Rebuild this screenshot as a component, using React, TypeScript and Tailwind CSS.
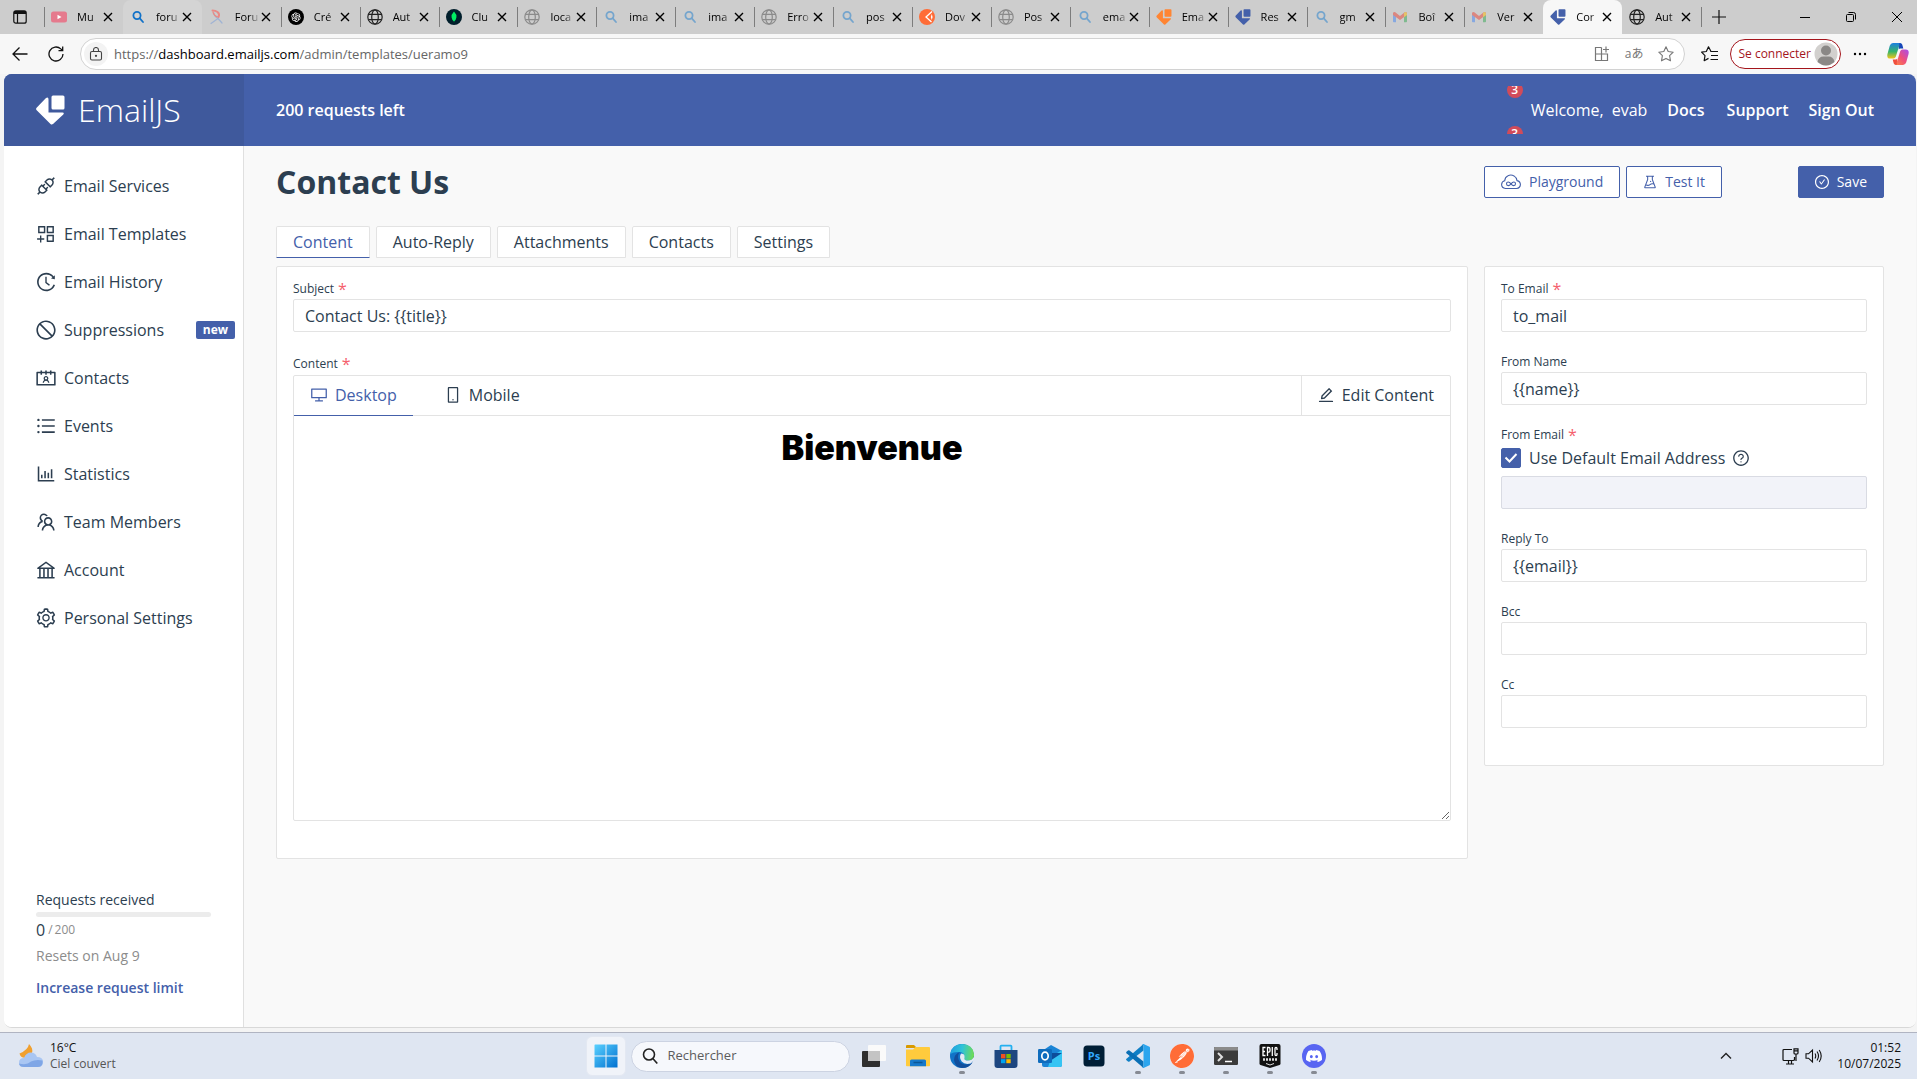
import { useState } from "react";
import type { ReactNode } from "react";
import {
  AiOutlineApi,
  AiOutlineAppstoreAdd,
  AiOutlineBank,
  AiOutlineBarChart,
  AiOutlineCheckCircle,
  AiOutlineContacts,
  AiOutlineDesktop,
  AiOutlineEdit,
  AiOutlineExperiment,
  AiOutlineHistory,
  AiOutlineMobile,
  AiOutlineOpenAI,
  AiOutlineQuestionCircle,
  AiOutlineSetting,
  AiOutlineStop,
  AiOutlineTeam,
  AiOutlineUnorderedList,
} from "react-icons/ai";
import { SiDiscord, SiPostman } from "react-icons/si";

function EmailJSMark({ className }: { className: string }) {
  return (
    <svg viewBox="0 0 29 30" className={className} fill="currentColor" aria-hidden="true">
      <rect x="15.5" y="0.5" width="13" height="14" rx="1.5" />
      <path d="M.6 12.8 10 3Q12.5 1.400 12.500 4.500V17.500H26.500Q28.600 17.700 27.300 19.400L17 29Q15.700 30 14.500 28.900L.7 15.300Q-.4 14 .6 12.800Z" />
    </svg>
  );
}

function Globe({ className }: { className: string }) {
  return (
    <svg viewBox="0 0 16 16" className={className} fill="none" stroke="currentColor" strokeWidth="1.2" aria-hidden="true">
      <circle cx="8" cy="8" r="7.200" />
      <ellipse cx="8" cy="8" rx="3.300" ry="7.200" />
      <path d="M1.500 5.400h13M1.500 10.600h13" />
    </svg>
  );
}

function SearchGlyph({ className }: { className: string }) {
  return (
    <svg viewBox="0 0 16 16" className={className} fill="none" stroke="currentColor" strokeWidth="1.800" strokeLinecap="round" aria-hidden="true">
      <circle cx="7" cy="6.500" r="3.600" />
      <path d="m9.800 9.300 3.200 3.700" />
    </svg>
  );
}

function GmailGlyph() {
  return (
    <svg viewBox="0 0 16 16" className="size-4 opacity-50" aria-hidden="true">
      <path d="M1 4v8.500q0 .8.800.8H4V6.600Z" fill="#4285f4" />
      <path d="M15 4v8.500q0 .8-.8.800H12V6.600Z" fill="#34a853" />
      <path d="M1 4.200Q1.500 2.300 3.300 3.300L8 6.900l4.700-3.600Q14.500 2.300 15 4.200V6l-7 5-7-5Z" fill="#ea4335" />
      <path d="M12 3.800Q14.500 1.800 15 4.500V6l-3 2.200Z" fill="#fbbc04" />
    </svg>
  );
}

function YoutubeGlyph() {
  return (
    <svg viewBox="0 0 16 16" className="size-4" aria-hidden="true">
      <rect x="0" y="2.500" width="16" height="11" rx="2.500" fill="#e57a8d" />
      <path d="m6.500 5.700 4 2.300-4 2.300Z" fill="#fff" />
    </svg>
  );
}

function FeatherGlyph() {
  return (
    <svg viewBox="0 0 16 16" className="size-4" fill="none" strokeLinecap="round" aria-hidden="true">
      <path d="M3.500 1.500q3 0 5 1.500 2.500 2 1 5" stroke="#e98a86" strokeWidth="2" />
      <path d="M5 4q0 3 4 5.500l-7 5M9 9.500l4 4.500" stroke="#9fb3d4" strokeWidth="1.200" />
      <path d="M4 3q1 4 5 5" stroke="#e98a86" strokeWidth="1.200" />
    </svg>
  );
}

function MongoGlyph() {
  return (
    <svg viewBox="0 0 16 16" className="size-4" aria-hidden="true">
      <circle cx="8" cy="8" r="8" fill="#001e2b" />
      <path d="M8 2.500q3 3 2.400 6Q10 11 8.200 12.300L8 14l-.2-1.700Q6 11 5.600 8.500 5 5.500 8 2.500Z" fill="#00ed64" />
    </svg>
  );
}

function PostmanTabGlyph() {
  return (
    <svg viewBox="0 0 16 16" className="size-4" aria-hidden="true">
      <circle cx="8" cy="8" r="8" fill="#ff6c37" />
      <path d="M13 2.500 7 8l5.500 5" stroke="#fff" strokeWidth="1.300" fill="none" />
      <path d="m12.800 5-1 3 1 3q1.600-3 0-6Z" fill="#fff" />
    </svg>
  );
}

function CloseGlyph({ className }: { className: string }) {
  return (
    <svg viewBox="0 0 10 10" className={className} stroke="currentColor" strokeWidth="1.400" aria-hidden="true">
      <path d="m1 1 8 8M9 1 1 9" />
    </svg>
  );
}

type TabInfo = { label: string; icon: ReactNode; sep: boolean; state?: "hover" | "active" };

const fadedGlobe = <Globe className="size-4 text-[#8b8b8b]" />;
const darkGlobe = <Globe className="size-4 text-[#222]" />;
const fadedSearch = <SearchGlyph className="size-4 text-[#75a5cd]" />;

const browserTabs: TabInfo[] = [
  { label: "Mu", icon: <YoutubeGlyph />, sep: true },
  { label: "foru", icon: <SearchGlyph className="size-4 text-[#1272c8]" />, sep: false, state: "hover" },
  { label: "Foru", icon: <FeatherGlyph />, sep: false },
  {
    label: "Cré",
    icon: (
      <span className="grid size-4 place-items-center rounded-full bg-black text-white">
        <AiOutlineOpenAI className="size-3" />
      </span>
    ),
    sep: true,
  },
  { label: "Aut", icon: darkGlobe, sep: true },
  { label: "Clu", icon: <MongoGlyph />, sep: true },
  { label: "loca", icon: fadedGlobe, sep: true },
  { label: "ima", icon: fadedSearch, sep: true },
  { label: "ima", icon: fadedSearch, sep: true },
  { label: "Erro", icon: fadedGlobe, sep: true },
  { label: "pos", icon: fadedSearch, sep: true },
  { label: "Dov", icon: <PostmanTabGlyph />, sep: true },
  { label: "Pos", icon: fadedGlobe, sep: true },
  { label: "ema", icon: fadedSearch, sep: true },
  { label: "Ema", icon: <EmailJSMark className="size-4 text-[#ff8533]" />, sep: true },
  { label: "Res", icon: <EmailJSMark className="size-4 text-[#4460aa]" />, sep: true },
  { label: "gm", icon: fadedSearch, sep: true },
  { label: "Boî", icon: <GmailGlyph />, sep: true },
  { label: "Ver", icon: <GmailGlyph />, sep: true },
  { label: "Cor", icon: <EmailJSMark className="size-4 text-[#4460aa]" />, sep: false, state: "active" },
  { label: "Aut", icon: darkGlobe, sep: false },
];

function BrowserTab({ tab }: { tab: TabInfo }) {
  const bg = tab.state === "active" ? "bg-[#f7f7f7]" : tab.state === "hover" ? "bg-[#d4d4d4]" : "";
  return (
    <div className={`flex h-full min-w-0 flex-1 items-center rounded-t-lg ${bg}`}>
      <span className={`h-5 w-px shrink-0 ${tab.sep ? "bg-[#7d7d7d]" : ""}`} />
      <button className="flex min-w-0 flex-1 items-center pl-1.5">
        <span className="shrink-0">{tab.icon}</span>
        <span className="ml-2.5 min-w-0 flex-1 overflow-hidden text-left text-[11px] leading-4 whitespace-nowrap text-black [mask-image:linear-gradient(to_right,black_55%,transparent)]">
          {tab.label}
        </span>
      </button>
      <button aria-label="Fermer l'onglet" className="mr-2.5 ml-px shrink-0 text-black">
        <CloseGlyph className="size-2.5" />
      </button>
    </div>
  );
}

function BrowserChrome() {
  return (
    <div className="shrink-0 bg-[#f7f7f7]">
      <div className="flex h-[34px] items-center bg-[#cdcdcd]">
        <button aria-label="Menu des onglets" className="flex w-11 shrink-0 justify-center pr-1">
          <svg viewBox="0 0 14 14" className="size-3.5" fill="none" stroke="#111" strokeWidth="1.200" aria-hidden="true">
            <rect x=".8" y=".8" width="12.400" height="12.400" rx="2" />
            <path d="M1 2.500h12" strokeWidth="3" />
            <path d="M4.500 3v10" />
          </svg>
        </button>
        <div className="flex h-full max-w-[1657px] min-w-0 flex-1">
          {browserTabs.map((tab, i) => (
            <BrowserTab key={i} tab={tab} />
          ))}
        </div>
        <span className="h-5 w-px shrink-0 bg-[#7d7d7d]" />
        <button aria-label="Nouvel onglet" className="ml-2.5 shrink-0">
          <svg viewBox="0 0 14 14" className="size-3.5" stroke="#111" strokeWidth="1.200" aria-hidden="true">
            <path d="M7 0v14M0 7h14" />
          </svg>
        </button>
        <div className="ml-auto flex shrink-0 gap-9 pr-[15px]">
          <button aria-label="Réduire">
            <svg viewBox="0 0 10 10" className="size-2.5" stroke="#000" aria-hidden="true">
              <path d="M0 5.500h10" />
            </svg>
          </button>
          <button aria-label="Restaurer">
            <svg viewBox="0 0 10 10" className="size-2.5" fill="none" stroke="#000" aria-hidden="true">
              <rect x=".5" y="2.500" width="7" height="7" rx="1" />
              <path d="M2.500.500h5q2 0 2 2v5" />
            </svg>
          </button>
          <button aria-label="Fermer">
            <svg viewBox="0 0 10 10" className="size-2.5" stroke="#000" aria-hidden="true">
              <path d="m0 0 10 10M10 0 0 10" />
            </svg>
          </button>
        </div>
      </div>

      <div className="flex h-10 items-center pr-2 pl-3">
        <button aria-label="Retour">
          <svg viewBox="0 0 16 16" className="size-4" fill="none" stroke="#111" strokeWidth="1.300" aria-hidden="true">
            <path d="M15.500 8H1M7.500 1.500 1 8l6.500 6.500" />
          </svg>
        </button>
        <button aria-label="Actualiser" className="ml-5">
          <svg viewBox="0 0 16 16" className="size-4" fill="none" stroke="#111" strokeWidth="1.300" aria-hidden="true">
            <path d="M15 8a7 7 0 1 1-2.200-5.100L14.500 4.500M14.700.500v4.200h-4.200" />
          </svg>
        </button>
        <div className="ml-4 flex h-8 min-w-0 flex-1 items-center rounded-full border border-[#d2d2d2] bg-white pr-2.5 pl-[3px]">
          <span className="grid size-6 shrink-0 place-items-center rounded-full bg-[#f3f3f3]">
            <svg viewBox="0 0 14 14" className="size-3.5" fill="none" stroke="#444" strokeWidth="1.100" aria-hidden="true">
              <rect x="1.500" y="4.500" width="11" height="8.500" rx="1.500" />
              <path d="M4.500 4.500V3a2.500 2.500 0 0 1 5 0v1.500" />
              <circle cx="7" cy="8.800" r=".6" fill="#444" />
            </svg>
          </span>
          <span className="ml-1.5 min-w-0 flex-1 truncate text-[13px] leading-5 text-[#666]">
            https://<span className="text-black">dashboard.emailjs.com</span>/admin/templates/ueramo9
          </span>
          <div className="flex shrink-0 items-center gap-[15px] text-[#777]">
            <svg viewBox="0 0 16 16" className="size-4" fill="none" stroke="currentColor" strokeWidth="1.200" aria-hidden="true">
              <path d="M7.500 1.500h-6v13h12v-5M1.500 8H13.500v6.500M7.500 1.500v13M12 .5v6M9 3.500h6" />
            </svg>
            <span className="text-xs">aあ</span>
            <svg viewBox="0 0 16 16" className="size-4" fill="none" stroke="currentColor" strokeWidth="1.100" strokeLinejoin="round" aria-hidden="true">
              <path d="m8 .8 2.200 4.700 5 .7-3.600 3.500.9 5.100L8 12.400l-4.500 2.400.9-5.100L.8 6.200l5-.7Z" />
            </svg>
          </div>
        </div>
        <button aria-label="Favoris" className="ml-4">
          <svg viewBox="0 0 17 16" className="h-4 w-[17px]" fill="none" stroke="#111" strokeWidth="1.200" strokeLinejoin="round" aria-hidden="true">
            <path d="M10 5.500 7.500.8 5.300 5.500l-4.700.7L4 9.700l-.8 5 4.300-2.300" />
            <path d="M9.500 5.500H17M10 9.500h7M9.500 13.500H17" />
          </svg>
        </button>
        <button className="ml-3 flex h-[30px] items-center gap-[3px] rounded-full border border-[#a4151c] bg-white pr-0.5 pl-[7px] text-xs text-[#a4151c]">
          Se connecter
          <svg viewBox="0 0 24 24" className="size-6" aria-hidden="true">
            <circle cx="12" cy="12" r="11.500" fill="#d2d0ce" />
            <circle cx="12" cy="8.500" r="5" fill="#8a8886" />
            <path d="M3.500 20q1-5.500 6-5.500h5q5 0 6 5.500-8.500 7-17 0Z" fill="#8a8886" />
          </svg>
        </button>
        <button aria-label="Paramètres et plus" className="ml-3">
          <svg viewBox="0 0 14 4" className="h-1 w-3.5" aria-hidden="true">
            <circle cx="2" cy="2" r="1.200" />
            <circle cx="7" cy="2" r="1.200" />
            <circle cx="12" cy="2" r="1.200" />
          </svg>
        </button>
        <button aria-label="Copilot" className="ml-5">
          <svg viewBox="0 0 24 24" className="size-[22px]" aria-hidden="true">
            <defs>
              <linearGradient id="cpA" x1="0" y1="0" x2="0" y2="1">
                <stop offset="0" stopColor="#1b7fe0" />
                <stop offset=".55" stopColor="#35b56a" />
                <stop offset="1" stopColor="#f5c518" />
              </linearGradient>
              <linearGradient id="cpB" x1="1" y1="0" x2="0" y2="1">
                <stop offset="0" stopColor="#a64df0" />
                <stop offset=".5" stopColor="#ef4f7b" />
                <stop offset="1" stopColor="#ff8a3c" />
              </linearGradient>
            </defs>
            <path d="M16.500 2.500Q16 0 13.500 0H6.500Q4 0 3 3L.5 12q-1 5 3 5h3.500q2 0 2.600-2L13 4q.7-2 2-2Z" fill="url(#cpA)" />
            <path d="M13.500 0q3 0 3.500 3l.8 3h-3.300q-1.200 0-1.700 1.200Z" fill="#1746b8" />
            <path d="M7.500 21.500Q8 24 10.500 24h7q2.500 0 3.500-3l2.500-9q1-5-3-5H17q-2 0-2.600 2L11 20q-.7 2-2 2Z" fill="url(#cpB)" />
            <path d="M10.500 24q-3 0-3.500-3l-.8-3h3.300q1.200 0 1.700-1.200Z" fill="#f04e3e" />
          </svg>
        </button>
      </div>
    </div>
  );
}

const navItems = [
  { label: "Email Services", Icon: AiOutlineApi },
  { label: "Email Templates", Icon: AiOutlineAppstoreAdd },
  { label: "Email History", Icon: AiOutlineHistory },
  { label: "Suppressions", Icon: AiOutlineStop, badge: "new" },
  { label: "Contacts", Icon: AiOutlineContacts },
  { label: "Events", Icon: AiOutlineUnorderedList },
  { label: "Statistics", Icon: AiOutlineBarChart },
  { label: "Team Members", Icon: AiOutlineTeam },
  { label: "Account", Icon: AiOutlineBank },
  { label: "Personal Settings", Icon: AiOutlineSetting },
];

function Sidebar() {
  return (
    <aside className="flex w-60 shrink-0 flex-col border-r border-[#e0e0e0] bg-white pt-4 pb-[29px]">
      <nav>
        {navItems.map(({ label, Icon, badge }) => (
          <a key={label} href="#" className="flex h-12 items-center pr-2 pl-[31px]">
            <Icon className="size-[22px] shrink-0" />
            <span className="ml-[7px]">{label}</span>
            {badge && (
              <span className="ml-auto rounded-xs bg-[#4460aa] px-[7px] text-xs leading-[18px] font-bold text-white">{badge}</span>
            )}
          </a>
        ))}
      </nav>
      <div className="mt-auto pr-8 pl-8 text-sm">
        <p>Requests received</p>
        <div className="mt-0.5 h-[5px] rounded-full bg-[#ececec]" />
        <p className="mt-px flex items-center leading-6">
          <span className="text-base leading-6">0</span>
          <span className="ml-[3px] text-xs text-[#8c8c8c]">/</span>
          <span className="ml-0.5 text-xs text-[#8c8c8c]">200</span>
        </p>
        <p className="mt-1 text-[#8c8c8c]">Resets on Aug 9</p>
        <a href="#" className="mt-3 block font-semibold text-[#4460aa]">
          Increase request limit
        </a>
      </div>
    </aside>
  );
}

function Header() {
  return (
    <header className="flex h-[72px] shrink-0 bg-[#4460aa] text-white">
      <a href="#" className="flex w-60 shrink-0 items-center bg-[#3f599c] pl-8">
        <EmailJSMark className="h-[30px] w-[29px]" />
        <span className="ml-[13px] text-[32px] leading-10 font-light">EmailJS</span>
      </a>
      <div className="flex min-w-0 flex-1 items-center pr-[42px] pl-8 font-semibold">
        <span>200 requests left</span>
        <div className="ml-auto flex h-12 w-4 flex-col gap-7 overflow-hidden">
          <span className="-mt-1 grid size-4 shrink-0 place-items-center rounded-full bg-[#d14b5a] text-xs leading-4">3</span>
          <span className="grid size-4 shrink-0 place-items-center rounded-full bg-[#d14b5a] text-xs leading-4">3</span>
        </div>
        <span className="ml-2 font-normal">Welcome,</span>
        <span className="ml-2 font-normal">evab</span>
        <a href="#" className="ml-5">
          Docs
        </a>
        <a href="#" className="ml-[22px]">
          Support
        </a>
        <a href="#" className="ml-5">
          Sign Out
        </a>
      </div>
    </header>
  );
}

function FieldLabel({ htmlFor, text, required }: { htmlFor: string; text: string; required?: boolean }) {
  return (
    <label htmlFor={htmlFor} className="flex h-[21px] items-center text-xs">
      {text}
      {required && <span className="ml-1 text-base leading-4 text-[#f5606d]">*</span>}
    </label>
  );
}

const inputClass = "h-[33px] w-full rounded-xs border border-[#e3e3e3] bg-white px-[11px] text-base outline-none";

function TextField({ id, label, value, required }: { id: string; label: string; value: string; required?: boolean }) {
  return (
    <div>
      <FieldLabel htmlFor={id} text={label} required={required} />
      <input id={id} type="text" defaultValue={value} className={inputClass} />
    </div>
  );
}

function CloudLoopIcon() {
  return (
    <svg viewBox="0 0 20 16" className="h-4 w-5" fill="none" stroke="currentColor" strokeWidth="1.100" aria-hidden="true">
      <path d="M4.500 14.500Q.6 14 .6 10.500.7 7.500 3.700 6.800 4 3 7 1.700q3-1.400 6 .2 2.500 1.500 3 4.700 3.400.8 3.400 4-.2 3.400-3.900 3.900Z" />
      <path d="M10 9.800q1.400-1.800 2.800-1.800 1.700 0 1.700 1.800t-1.700 1.800q-1.400 0-2.800-1.800t-2.800-1.800q-1.700 0-1.700 1.800t1.700 1.800q1.400 0 2.800-1.800Z" />
    </svg>
  );
}

const templateTabs = ["Content", "Auto-Reply", "Attachments", "Contacts", "Settings"];

function TemplateEditor() {
  const [active, setActive] = useState("Content");
  const [useDefault, setUseDefault] = useState(true);
  return (
    <main className="min-w-0 flex-1 bg-[#f9f9f9] px-8 pt-4">
      <div className="flex h-10 items-center">
        <h1 className="text-[32px] leading-10 font-bold">Contact Us</h1>
        <div className="ml-auto flex w-[400px] shrink-0 gap-1.5 text-sm">
          <button className="flex h-8 items-center gap-2 rounded-xs border border-[#4460aa] bg-white px-4 text-[#4460aa]">
            <CloudLoopIcon />
            Playground
          </button>
          <button className="flex h-8 items-center gap-[7px] rounded-xs border border-[#4460aa] bg-white pr-4 pl-[15px] text-[#4460aa]">
            <AiOutlineExperiment className="size-4" />
            Test It
          </button>
          <button className="ml-auto flex h-8 items-center gap-[7px] rounded-xs border border-[#4460aa] bg-[#4460aa] pr-4 pl-[15px] font-medium text-white">
            <AiOutlineCheckCircle className="size-4" />
            Save
          </button>
        </div>
      </div>

      <div role="tablist" className="mt-6 flex gap-1.5">
        {templateTabs.map((name) => (
          <button
            key={name}
            role="tab"
            aria-selected={active === name}
            onClick={() => setActive(name)}
            className={`h-8 rounded-t-xs border border-[#e3e3e3] bg-white px-4 ${
              active === name ? "border-b-[#4460aa] text-[#4460aa]" : ""
            }`}
          >
            {name}
          </button>
        ))}
      </div>

      <div className="mt-2 flex items-start gap-4">
        <section className="min-w-0 flex-1 rounded-xs border border-[#e3e3e3] bg-white px-4 pt-[11px] pb-[37px]">
          <TextField id="subject" label="Subject" value="Contact Us: {{title}}" required />
          <div className="mt-[21px]">
            <FieldLabel htmlFor="desktop-view" text="Content" required />
            <div className="mt-px rounded-xs border border-[#e3e3e3]">
              <div className="flex h-10 border-b border-[#e3e3e3]">
                <button id="desktop-view" className="-mb-px flex items-center gap-[7px] border-b border-[#4460aa] px-4 pb-px text-[#4460aa]">
                  <AiOutlineDesktop className="size-[18px]" />
                  Desktop
                </button>
                <button className="ml-[15px] flex items-center gap-[7px] px-4 pb-px">
                  <AiOutlineMobile className="size-[18px]" />
                  Mobile
                </button>
                <button className="ml-auto flex items-center gap-[7px] border-l border-[#e3e3e3] pr-4 pl-[15px] pb-px">
                  <AiOutlineEdit className="size-[18px]" />
                  Edit Content
                </button>
              </div>
              <div className="h-[404px] resize-y overflow-auto pt-2">
                <h2 className="text-center font-['Inter',sans-serif] text-[34px] leading-12 font-black text-black">Bienvenue</h2>
              </div>
            </div>
          </div>
        </section>

        <section className="flex w-[400px] shrink-0 flex-col gap-[19px] rounded-xs border border-[#e3e3e3] bg-white px-4 pt-[11px] pb-[37px]">
          <TextField id="to" label="To Email" value="to_mail" required />
          <TextField id="from-name" label="From Name" value="{{name}}" />
          <div>
            <FieldLabel htmlFor="from-email" text="From Email" required />
            <div className="flex h-[31px] items-start pt-[3px]">
              <label className="flex h-5 items-center">
                <span className="grid size-5 place-items-center">
                  <input
                    type="checkbox"
                    checked={useDefault}
                    onChange={(e) => setUseDefault(e.target.checked)}
                    className="col-start-1 row-start-1 size-5 appearance-none rounded-xs border border-[#4460aa] checked:bg-[#4460aa]"
                  />
                  {useDefault && (
                    <svg viewBox="0 0 14 10" className="pointer-events-none col-start-1 row-start-1 h-2.5 w-3.5" fill="none" stroke="#fff" strokeWidth="2" aria-hidden="true">
                      <path d="m1.500 4.500 4 4 7-7.500" />
                    </svg>
                  )}
                </span>
                <span className="ml-2 leading-5">Use Default Email Address</span>
              </label>
              <AiOutlineQuestionCircle className="mt-px ml-[7px] size-[18px]" />
            </div>
            <input id="from-email" type="text" disabled className="h-[33px] w-full rounded-xs border border-[#d9dbe3] bg-[#f2f3f9] px-[11px]" />
          </div>
          <TextField id="reply-to" label="Reply To" value="{{email}}" />
          <TextField id="bcc" label="Bcc" value="" />
          <TextField id="cc" label="Cc" value="" />
        </section>
      </div>
    </main>
  );
}

function WindowsLogo() {
  return (
    <svg viewBox="0 0 24 24" className="size-6" aria-hidden="true">
      <defs>
        <linearGradient id="win" x1="0" y1="0" x2="1" y2="1">
          <stop offset="0" stopColor="#5ad1ff" />
          <stop offset="1" stopColor="#0070d0" />
        </linearGradient>
      </defs>
      <path d="M1 .5h10.500v11H.5V1ZM12.500.500h11v11h-11ZM.5 12.500h11v11H.5ZM12.500 12.500h11v11h-11Z" fill="url(#win)" />
    </svg>
  );
}

function TaskViewIcon() {
  return (
    <svg viewBox="0 0 24 24" className="size-6" aria-hidden="true">
      <rect x="0" y="7" width="18" height="16" rx="1" fill="#2f2f2f" />
      <rect x="6" y="1" width="18" height="16" rx="1" fill="#fafafa" />
      <path d="M6 7h12v10H6Z" fill="#c4c4c4" />
    </svg>
  );
}

function ExplorerIcon() {
  return (
    <svg viewBox="0 0 24 24" className="size-6" aria-hidden="true">
      <path d="M0 2q0-1 1-1h7l3 3H0Z" fill="#d99a00" />
      <path d="M0 5.500h7L9.500 3H23q1 0 1 1v17.500q0 .8-.8.800H.8q-.8 0-.8-.8Z" fill="#ffcb3d" />
      <path d="M4 17q0-1.500 1.500-1.500h13q1.500 0 1.500 1.500v5.300H4Z" fill="#1679cb" />
      <path d="M7.500 18.500h9" stroke="#0a5796" strokeWidth="1.500" />
    </svg>
  );
}

function EdgeIcon() {
  return (
    <svg viewBox="0 0 24 24" className="size-6" aria-hidden="true">
      <defs>
        <linearGradient id="edA" x1="0" y1=".3" x2="1" y2=".4">
          <stop offset="0" stopColor="#1f9fe0" />
          <stop offset=".5" stopColor="#2fc3d8" />
          <stop offset="1" stopColor="#6fdc55" />
        </linearGradient>
      </defs>
      <circle cx="12" cy="12" r="12" fill="#1173c7" />
      <path d="M.2 10Q2 0 12 0q11 0 12 10.500.3 6-6 6-5 0-4-3 1-5-4-5.500Q4 7.500.2 10Z" fill="url(#edA)" />
      <path d="M10 8Q7 11 8.500 15.500q2 5 8 5 3 0 6-2Q19 24 12 24 5 23.500 4 16q0-6 6-8Z" fill="#124e9c" />
      <path d="M11 9.500q4 0 3.500 4-1 3 3.500 3 4 0 6-3.500l.2 3-3.500 3.500q-6 1.500-9-2-3-4-.7-8Z" fill="#e3eaf5" />
    </svg>
  );
}

function StoreIcon() {
  return (
    <svg viewBox="0 0 24 24" className="size-6" aria-hidden="true">
      <path d="M6.500 6V2.500q0-.8.800-.8h9.400q.8 0 .8.800V6" fill="none" stroke="#24b0f0" strokeWidth="1.800" />
      <path d="M.5 6h23v15q0 3-3 3h-17q-3 0-3-3Z" fill="#1d4680" />
      <path d="M7 10h4.400v4.400H7Z" fill="#f25022" />
      <path d="M12.300 10h4.400v4.400h-4.400Z" fill="#7fba00" />
      <path d="M7 15.200h4.400v4H7Z" fill="#00a4ef" />
      <path d="M12.300 15.200h4.400v4h-4.400Z" fill="#ffb900" />
    </svg>
  );
}

function OutlookIcon() {
  return (
    <svg viewBox="0 0 24 24" className="size-6" aria-hidden="true">
      <path d="M4 7 13 1l11 6v14q0 2-2 2H6q-2 0-2-2Z" fill="#1a84d6" />
      <path d="m14 12 10-6v15q0 2-2 2H10Z" fill="#35c4f3" />
      <path d="M10 9h14l-12 8Z" fill="#0d4d9a" />
      <rect x="0" y="5" width="14" height="14" rx="1.200" fill="#0f6cbd" />
      <ellipse cx="7" cy="12" rx="3.200" ry="3.800" fill="none" stroke="#fff" strokeWidth="1.700" />
    </svg>
  );
}

function PhotoshopIcon() {
  return (
    <svg viewBox="0 0 24 24" className="size-6" aria-hidden="true">
      <rect x="1.500" y="1.500" width="21" height="21" rx="3.500" fill="#001e36" />
      <text x="12" y="15.500" textAnchor="middle" fontSize="11" fontWeight="700" fill="#31a8ff">
        Ps
      </text>
    </svg>
  );
}

function CodeIcon() {
  return (
    <svg viewBox="0 0 24 24" className="size-6" aria-hidden="true">
      <path d="M17.500 6.500 3.500 17.500q-.8.500-1.500 0L.5 16.200q-.8-.8 0-1.500L17.500 0Z" fill="#0f7fc6" />
      <path d="M17.500 17.500 3.500 6.500Q2.700 6 2 6.500L.5 7.800q-.8.800 0 1.500L17.500 24Z" fill="#0a6fb5" />
      <path d="m17.500 0 6 2.700q.5.300.5 1v16.600q0 .7-.5 1l-6 2.700q-1 0-1.500-1 1.500.7 1.500-1V2q0-1.700-1.500-1 .5-1 1.500-1Z" fill="#2ba5ee" />
    </svg>
  );
}

function TerminalIcon() {
  return (
    <svg viewBox="0 0 24 24" className="size-6" aria-hidden="true">
      <rect x="0" y="3" width="24" height="18" rx="1.200" fill="#3b3b3b" />
      <path d="M0 6.500V4.200Q0 3 1.200 3h21.600Q24 3 24 4.200v2.300Z" fill="#8b8b8b" />
      <path d="m4 9 4 4-4 4" fill="none" stroke="#e0e0e0" strokeWidth="2" />
      <path d="M11 17.500h7" stroke="#fff" strokeWidth="1.500" />
    </svg>
  );
}

function EpicIcon() {
  return (
    <svg viewBox="0 0 24 24" className="size-6" aria-hidden="true">
      <path d="M1.500 2q0-2 2-2h17q2 0 2 2v17.500q0 1-1 1.500L12 24l-9.500-3q-1-.5-1-1.500Z" fill="#111" />
      <path d="M7.500 3.500H5v8h2.500M5 7.500h2M9.500 12V3.500h1.300q1.200 0 1.200 1.300v2q0 1.300-1.200 1.300H9.500M14.300 3v9M19 6V4.500q0-1-1-1t-1 1v6q0 1 1 1t1-1V9" fill="none" stroke="#fff" strokeWidth="1.300" />
      <path d="M5 15.500h14" stroke="#ddd" strokeWidth="2.500" strokeDasharray="2 1" />
      <path d="m8 19.500 4 1.500 4-1.500" fill="none" stroke="#ddd" />
    </svg>
  );
}

const apps: { name: string; icon: ReactNode; running: boolean }[] = [
  { name: "Vue des tâches", icon: <TaskViewIcon />, running: false },
  { name: "Explorateur", icon: <ExplorerIcon />, running: false },
  { name: "Edge", icon: <EdgeIcon />, running: true },
  { name: "Store", icon: <StoreIcon />, running: false },
  { name: "Outlook", icon: <OutlookIcon />, running: false },
  { name: "Photoshop", icon: <PhotoshopIcon />, running: false },
  { name: "Code", icon: <CodeIcon />, running: true },
  {
    name: "Postman",
    icon: (
      <span className="block rounded-full bg-white">
        <SiPostman className="size-6 text-[#ff6c37]" />
      </span>
    ),
    running: true,
  },
  { name: "Terminal", icon: <TerminalIcon />, running: true },
  { name: "Epic Games", icon: <EpicIcon />, running: true },
  {
    name: "Discord",
    icon: (
      <span className="grid size-6 place-items-center rounded-full bg-[#5865f2] text-white">
        <SiDiscord className="size-4" />
      </span>
    ),
    running: true,
  },
];

function Taskbar() {
  return (
    <footer className="grid h-[47px] shrink-0 grid-cols-[1fr_auto_1fr] items-center border-t border-[#b0b4c2] bg-[#dfe6f2] text-xs">
      <div className="flex items-center pl-[18px]">
        <svg viewBox="0 0 26 24" className="h-6 w-[26px]" aria-hidden="true">
          <path d="M11 0q-1 6-9.500 9.500Q3 15 9 13.500q7-3 5-9Q13 2 11 0Z" fill="#f0a030" />
          <path d="M6 23q-5 0-5-4.500T6 14q2-5.500 7-5.500 4.500 0 6 4.500 6 0 6 5t-5 5Z" fill="#a9c6f3" />
          <path d="M6 23q-4.500 0-5-3.500 8 2 12-2 5-2.500 11.500-1 1 6.500-4.500 6.500Z" fill="#7fa6e6" />
        </svg>
        <div className="ml-1.5 leading-4">
          <p className="text-[#111]">16°C</p>
          <p className="text-[#555]">Ciel couvert</p>
        </div>
      </div>

      <div className="flex items-center pr-1.5">
        <button aria-label="Démarrer" className="grid size-10 place-items-center rounded-md border border-[#e3e8f2] bg-[#f0f3f9]">
          <WindowsLogo />
        </button>
        <label className="ml-[5px] flex h-[31px] w-[219px] items-center gap-2.5 rounded-full border border-[#ccd3e2] bg-[#f6f8fc] pl-2.5">
          <svg viewBox="0 0 16 16" className="size-4" fill="none" stroke="#222" strokeWidth="1.600" aria-hidden="true">
            <circle cx="7" cy="6.500" r="5.500" />
            <path d="m10.800 10.500 4.500 5" />
          </svg>
          <input type="text" aria-label="Rechercher" placeholder="Rechercher" className="w-36 bg-transparent text-[13px] outline-none placeholder:text-[#5c5c5c]" />
        </label>
        <div className="ml-3 flex gap-5">
          {apps.map((app) => (
            <button key={app.name} aria-label={app.name} className="relative">
              {app.icon}
              {app.running && <span className="absolute -bottom-1.5 left-1/2 h-[3px] w-1.5 -translate-x-1/2 rounded-full bg-[#868a93]" />}
            </button>
          ))}
        </div>
      </div>

      <div className="flex items-center justify-end pr-4">
        <svg viewBox="0 0 12 8" className="h-2 w-3" fill="none" stroke="#222" strokeWidth="1.400" aria-hidden="true">
          <path d="m1 6.500 5-5 5 5" />
        </svg>
        <svg viewBox="0 0 17 17" className="ml-[50px] size-[17px]" fill="none" stroke="#111" strokeWidth="1.200" aria-hidden="true">
          <path d="M10 1.500H2q-1 0-1 1v9q0 1 1 1h9q1.500 0 1.500-1V9M4 16h8M6.500 13v3M9.500 13v3M12 .8h4V5q0 1-1 1h-2q-1 0-1-1ZM14 6v7M12 2.800h4" />
        </svg>
        <svg viewBox="0 0 18 16" className="ml-1.5 h-4 w-[18px]" fill="none" stroke="#111" strokeWidth="1.100" aria-hidden="true">
          <path d="M1 5.800v4.400h2.500L7.500 14V2L3.500 5.800ZM10 5.500q1.500 2.500 0 5M12 3.500q3 4.500 0 9M14.200 2q4 6 0 12" />
        </svg>
        <div className="ml-3.5 text-right leading-4 text-[#111]">
          <p>01:52</p>
          <p>10/07/2025</p>
        </div>
      </div>
    </footer>
  );
}

export default function App() {
  return (
    <div className="flex min-h-screen flex-col bg-[#f4f4f4] font-['Open_Sans','Noto_Sans_CJK_JP',sans-serif] text-base text-[#2c3e50]">
      <BrowserChrome />
      <div className="mr-px mb-1 ml-1 flex flex-1 flex-col overflow-hidden rounded-lg border-b border-[#d8d8d8] bg-white">
        <Header />
        <div className="flex flex-1">
          <Sidebar />
          <TemplateEditor />
        </div>
      </div>
      <Taskbar />
    </div>
  );
}
